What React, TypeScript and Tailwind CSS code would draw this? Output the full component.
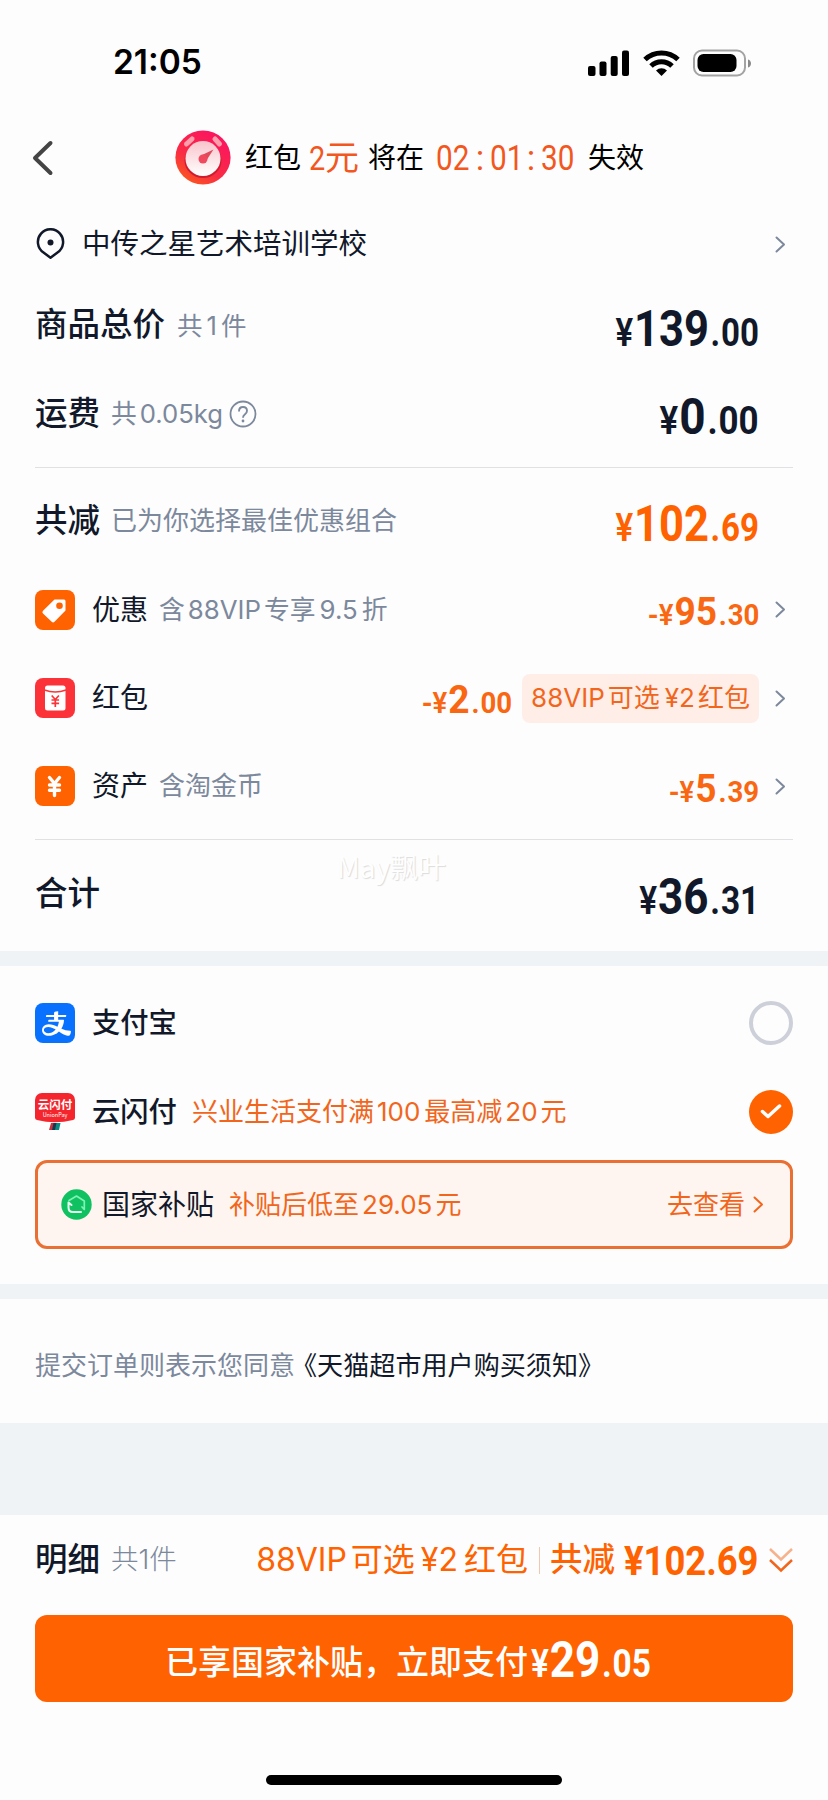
import type { ReactNode } from "react";
import { AiOutlineAlipay } from "react-icons/ai";

interface PriceProps {
	integer: string;
	decimal: string;
	negative?: boolean;
	large?: boolean;
	className?: string;
}

interface RowProps {
	children: ReactNode;
	className?: string;
}

// Latin letters and digits sitting between Chinese characters
const Num = ({ children, className = "mx-[3px]" }: RowProps) => (
	<span className={className}>{children}</span>
);

const Price = ({ integer, decimal, negative, large, className = "" }: PriceProps) => (
	<span
		className={`inline-block whitespace-nowrap font-['Roboto','Noto_Sans_CJK_SC',sans-serif] font-bold leading-none ${
			large ? "text-[38px]" : "text-[29px]"
		} ${className}`}
	>
		{negative && "-"}
		<span className="font-semibold">¥</span>
		<span className={`mr-[2px] ml-px ${large ? "text-[50px]" : "text-[39px]"}`}>{integer}</span>
		<span className="mr-px">.</span>
		{decimal}
	</span>
);

const Chevron = ({ className = "text-[#7c889c]" }: { className?: string }) => (
	<svg width="11" height="17" viewBox="0 0 11 17" className={className}>
		<path
			d="M1.5 1.5 9 8.5 1.5 15.5"
			fill="none"
			stroke="currentColor"
			strokeWidth="2"
			strokeLinecap="round"
			strokeLinejoin="round"
		/>
	</svg>
);

const Row = ({ children, className = "h-[88px]" }: RowProps) => (
	<div className={`flex items-center whitespace-nowrap ${className}`}>{children}</div>
);

const Arrow = () => (
	<div className="flex w-[34px] justify-end pr-[7px]">
		<Chevron />
	</div>
);

const StatusIcons = () => (
	<svg width="166" height="28" viewBox="0 0 166 28">
		<rect x="1" y="17" width="7.5" height="10" rx="2" />
		<rect x="12.5" y="12.5" width="7" height="14.5" rx="2" />
		<rect x="23.7" y="7" width="7" height="20" rx="2" />
		<rect x="35" y="1.5" width="7" height="25.5" rx="2" />
		<g fill="none" stroke="#000" strokeWidth="5">
			<path d="M58 10.5a24 24 0 0 1 33 0" />
			<path d="M64 17a15 15 0 0 1 21 0" />
		</g>
		<path d="M74.5 27l-5.5-5.6a8 8 0 0 1 11 0z" />
		<rect x="107" y="1.5" width="51" height="25" rx="8" fill="none" stroke="#a3a3a3" strokeWidth="2" />
		<rect x="110.5" y="5" width="39" height="18" rx="6" />
		<path d="M161 10.5c4 1 4 7 0 8z" fill="#8a8a8a" />
	</svg>
);

const ClockIcon = () => (
	<svg width="56" height="56" viewBox="0 0 56 56">
		<defs>
			<linearGradient id="clock" x1="0.8" y1="0.1" x2="0.2" y2="1">
				<stop offset="0" stopColor="#fb1560" />
				<stop offset="0.6" stopColor="#f92c44" />
				<stop offset="1" stopColor="#fc5a1c" />
			</linearGradient>
			<linearGradient id="face" x1="0" y1="0" x2="0" y2="1">
				<stop offset="0" stopColor="#f9c4cb" />
				<stop offset="1" stopColor="#fff" />
			</linearGradient>
		</defs>
		<ellipse cx="28" cy="27.5" rx="27.6" ry="27" fill="url(#clock)" />
		<g stroke="#fda0ac" strokeWidth="5" strokeLinecap="round">
			<path d="M11.5 14l5.5-5" />
			<path d="M40 9l4.5 5" />
		</g>
		<ellipse cx="28" cy="30.5" rx="18.5" ry="17.5" fill="#cf1b2e" />
		<circle cx="28" cy="28.5" r="17.5" fill="url(#face)" />
		<path d="M26 25.5 38.5 19.5 31 31z" fill="#e04a5a" />
		<circle cx="28" cy="29" r="4.5" fill="#f0485c" />
	</svg>
);

const TagIcon = () => (
	<svg width="40" height="40" viewBox="0 0 40 40">
		<rect width="40" height="40" rx="8" fill="#ff6200" />
		<path
			d="M19.5 9.5h9.5a1.5 1.5 0 0 1 1.5 1.5v9.5l-11 11.3a2 2 0 0 1-2.8 0L8 23.5a2 2 0 0 1 0-2.8z"
			fill="#fff"
		/>
		<circle cx="24.5" cy="15.7" r="3.3" fill="#ff6200" />
	</svg>
);

const RedPacketIcon = () => (
	<svg width="40" height="40" viewBox="0 0 40 40">
		<rect width="40" height="40" rx="8" fill="#fb3338" />
		<rect x="10" y="7.5" width="20.5" height="25" rx="2.5" fill="#fff" />
		<path d="M9.5 12q10.7 4 21.5 0" fill="none" stroke="#fb3338" strokeWidth="1.5" />
		<path
			d="M16.7 17.5l3.6 4 3.6-4M20.3 21v8M16.5 22h7.6M16.5 25.3h7.6"
			fill="none"
			stroke="#fb3338"
			strokeWidth="1.7"
		/>
	</svg>
);

const YenIcon = () => (
	<svg width="40" height="40" viewBox="0 0 40 40">
		<rect width="40" height="40" rx="8" fill="#ff6200" />
		<path
			d="M14.5 11.5l5 6 5-6M19.5 18v11.5M14.5 19h10M14.5 24.3h10"
			fill="none"
			stroke="#fff"
			strokeWidth="3.4"
			strokeLinecap="round"
			strokeLinejoin="round"
		/>
	</svg>
);

const UnionPayIcon = () => (
	<svg width="40" height="40" viewBox="0 0 40 40" className="font-['Noto_Sans_CJK_SC',sans-serif]">
		<path d="M7 1h26a7 7 0 0 1 7 7v17.5q0 2-2 2.5-18 4.5-36 0-2-.5-2-2.5V8a7 7 0 0 1 7-7z" fill="#f4252c" />
		<text x="20" y="17" fontSize="11.5" fontWeight="700" fill="#fff" textAnchor="middle">
			云闪付
		</text>
		<text x="20" y="24.5" fontSize="5.5" fill="#fff" textAnchor="middle">
			UnionPay
		</text>
		<path d="M16 31h4l-2 7h-4z" fill="#c8323e" />
		<path d="M18.5 31h4l-1.500 7h-4z" fill="#16374f" />
		<path d="M21.5 31h4l-1.500 7h-4z" fill="#0e8a85" />
	</svg>
);

const SubsidyIcon = () => (
	<svg width="31" height="31" viewBox="0 0 31 31">
		<circle cx="15.5" cy="15.5" r="15.2" fill="#0fc161" />
		<g fill="none" strokeLinecap="round" strokeLinejoin="round">
			<path d="M8 11.5 15.5 7l7.800 5v8.5l-2.300-2.5" stroke="#7df3b4" strokeWidth="1.7" />
			<path d="M10.5 16l-3-2.5v5q0 4.500 4.500 4.500h8" stroke="#e6fdf0" strokeWidth="2" />
		</g>
	</svg>
);

const App: React.FC = () => {
	return (
		<div className="relative h-[1800px] w-[828px] overflow-hidden bg-[#fdfdfd] font-['Inter','Noto_Sans_CJK_SC',sans-serif] leading-none text-[#11182a]">
			{/* Status bar */}
			<div className="flex h-[116px] items-center justify-between pt-[9px] pr-[75px] pl-[113px] text-black">
				<span className="text-[33.5px] font-semibold">21:05</span>
				<StatusIcons />
			</div>

			{/* Countdown header */}
			<header className="flex h-[84px] items-center pl-[32px] text-[28px] whitespace-nowrap text-black">
				<svg width="22" height="36" viewBox="0 0 22 36">
					<path
						d="M18.5 3 3 18l15.5 15"
						fill="none"
						stroke="#444"
						strokeWidth="4"
						strokeLinecap="round"
						strokeLinejoin="round"
					/>
				</svg>
				<div className="ml-[121px]">
					<ClockIcon />
				</div>
				<span className="ml-[14px]">红包</span>
				<span className="ml-[8px] font-['Roboto','Noto_Sans_CJK_SC',sans-serif] text-[34px] text-[#f2571f]">
					<span className="inline-block w-[16px] origin-left scale-x-85">2</span>元
				</span>
				<span className="ml-[9px]">将在</span>
				<span className="ml-[12px] flex w-[139px] justify-between font-['Roboto',sans-serif] text-[35px] text-[#f2571f]">
					<span className="w-[34px] origin-left scale-x-85">02</span>
					<span>:</span>
					<span className="w-[31px] origin-left scale-x-85">01</span>
					<span>:</span>
					<span className="w-[34px] origin-left scale-x-85">30</span>
				</span>
				<span className="ml-[13px]">失效</span>
			</header>

			<main>
				<section className="px-[35px]">
					<Row className="h-[81px] pt-[7px] text-[28.5px]">
						<svg width="30" height="32" viewBox="0 0 30 32">
							<path
								d="M15.5 29.700l-7-5.200A12.600 12.700 0 1 1 22.500 24.500z"
								fill="none"
								stroke="currentColor"
								strokeWidth="2.5"
								strokeLinejoin="round"
							/>
							<circle cx="15.5" cy="14.5" r="3" fill="currentColor" />
						</svg>
						<span className="ml-[17px] flex-1">中传之星艺术培训学校</span>
						<Arrow />
					</Row>

					{/* Totals */}
					<Row className="h-[89px] pr-[34px]">
						<span className="text-[32.5px] font-medium">商品总价</span>
						<span className="ml-[12px] flex-1 text-[25.5px] text-[#7c889c]">
							共<Num className="mx-[4px]">1</Num>件
						</span>
						<Price large integer="139" decimal="00" className="mt-[6px] origin-right scale-x-87" />
					</Row>
					<Row className="h-[88px] pr-[34px]">
						<span className="text-[32.5px] font-medium">运费</span>
						<span className="ml-[11px] text-[25.7px] text-[#7c889c]">
							共<Num>0.05kg</Num>
						</span>
						<svg width="28" height="28" viewBox="0 0 28 28" className="ml-[3px] text-[#7c889c]">
							<circle cx="14" cy="14" r="12.5" fill="none" stroke="currentColor" strokeWidth="1.8" />
							<path
								d="M10 11.5q0-4.500 4-4.500t4 3.800q0 2-2 3.400t-2 3.600"
								fill="none"
								stroke="currentColor"
								strokeWidth="1.9"
							/>
							<circle cx="14" cy="21" r="1.4" fill="currentColor" />
						</svg>
						<span className="flex-1" />
						<Price large integer="0" decimal="00" className="mt-[6px] origin-right scale-x-92" />
					</Row>
					<div className="my-[9px] h-px bg-[#dfe1e4]" />
					<Row className="h-[88px] pr-[34px]">
						<span className="text-[32.5px] font-medium">共减</span>
						<span className="ml-[11px] flex-1 text-[26px] text-[#7c889c]">已为你选择最佳优惠组合</span>
						<Price large integer="102" decimal="69" className="mt-[6px] origin-right scale-x-87 text-[#ff6200]" />
					</Row>

					{/* Discounts */}
					<Row className="h-[89px]">
						<TagIcon />
						<span className="ml-[17px] text-[28px]">优惠</span>
						<span className="ml-[11px] flex-1 text-[25.8px] text-[#7c889c]">
							含<Num>88VIP</Num>专享<Num className="mx-[4px]">9.5</Num>折
						</span>
						<Price negative integer="95" decimal="30" className="mt-[5px] origin-right scale-x-95 text-[#f96713]" />
						<Arrow />
					</Row>
					<Row>
						<RedPacketIcon />
						<span className="ml-[17px] flex-1 text-[28px]">红包</span>
						<Price negative integer="2" decimal="00" className="mt-[5px] origin-right scale-x-95 text-[#f96713]" />
						<span className="ml-[10px] flex h-[49px] w-[237px] items-center justify-center rounded-lg bg-[#ffeee7] text-[26px] text-[#f1661c]">
							88VIP<Num className="mr-[5px] ml-[3px]">可选</Num>¥2<Num className="ml-[3px]">红包</Num>
						</span>
						<Arrow />
					</Row>
					<Row>
						<YenIcon />
						<span className="ml-[17px] text-[28px]">资产</span>
						<span className="ml-[11px] flex-1 text-[26px] text-[#7c889c]">含淘金币</span>
						<Price negative integer="5" decimal="39" className="mt-[6px] origin-right scale-x-95 text-[#f96713]" />
						<Arrow />
					</Row>
					<div className="my-[9px] h-px bg-[#dfe1e4]" />
					<Row className="mb-[14px] h-[88px] pr-[34px]">
						<span className="flex-1 pt-[2px] text-[32.5px] font-medium">合计</span>
						<Price large integer="36" decimal="31" className="mt-[7px] origin-right scale-x-88" />
					</Row>
				</section>

				<div className="h-[15px] bg-[#f0f3f6]" />

				{/* Payment methods */}
				<section className="px-[35px] pt-[13px] pb-[35px]">
					<Row>
						<span className="flex size-[40px] items-center justify-center rounded-lg bg-[#0872ff] pl-[3px] text-white">
							<AiOutlineAlipay size={33} />
						</span>
						<span className="ml-[17px] flex-1 pt-px text-[28.3px] font-medium">支付宝</span>
						<span className="size-[44px] rounded-full border-4 border-[#cdd0d9]" />
					</Row>
					<Row className="h-[89px]">
						<UnionPayIcon />
						<span className="ml-[17px] pt-px text-[28.3px] font-medium">云闪付</span>
						<span className="ml-[15px] flex-1 text-[26px] text-[#f1661c]">
							兴业生活支付满<Num className="mr-[4px] ml-[3px]">100</Num>最高减
							<Num className="mx-[3px]">20</Num>元
						</span>
						<span className="flex size-[44px] items-center justify-center rounded-full bg-[#ff6200]">
							<svg width="22" height="17" viewBox="0 0 22 17">
								<path
									d="M2.5 8.5 8 13.5 19.5 3"
									fill="none"
									stroke="#fff"
									strokeWidth="3.5"
									strokeLinecap="round"
									strokeLinejoin="round"
								/>
							</svg>
						</span>
					</Row>
					<Row className="mt-1 h-[89px] rounded-xl border-3 border-[#ea6f33] bg-[#fff5f0] pr-[26px] pl-[23px] text-[26px] text-[#f1661c]">
						<SubsidyIcon />
						<span className="ml-[10px] text-[28px] text-[#11182a]">国家补贴</span>
						<span className="ml-[15px] flex-1">
							补贴后低至<Num>29.05</Num>元
						</span>
						<span className="mr-[8px]">去查看</span>
						<Chevron className="text-[#f1661c]" />
					</Row>
				</section>

				<div className="h-[15px] bg-[#f0f3f6]" />

				<p className="flex h-[124px] items-center px-[35px] pt-[10px] text-[26px] whitespace-nowrap text-[#7c889c]">
					提交订单则表示您同意
					<span className="-ml-[4px] text-[26.1px] text-[#11182a]">《天猫超市用户购买须知》</span>
				</p>

				<div className="h-[92px] bg-[#f0f3f6]" />
			</main>

			{/* Checkout bar */}
			<footer className="px-[35px]">
				<Row className="h-[88px] pt-[2px] text-[32px] text-[#ff6200]">
					<span className="text-[32.5px] font-medium text-[#11182a]">明细</span>
					<span className="ml-[11px] flex-1 text-[27.5px] font-light text-[#7c889c]">共1件</span>
					<span>
						88VIP<Num className="mr-[6px] ml-[4px]">可选</Num>¥2<Num className="ml-[6px]">红包</Num>
					</span>
					<span className="mr-[10px] ml-[11px] h-[27px] w-px bg-[#f3c7ae]" />
					<span className="text-[32.5px] font-medium">共减</span>
					<span className="mt-[4px] ml-[9px] w-[135px] origin-left scale-x-91 font-['Roboto',sans-serif] text-[40px] font-bold">
						¥102.69
					</span>
					<svg width="24" height="26" viewBox="0 0 24 26" className="ml-[10px]">
						<g fill="none" stroke="#f1661c" strokeWidth="2.5">
							<path d="M1 2l11 10.5L23 2" opacity="0.5" />
							<path d="M1 13l11 10.5L23 13" />
						</g>
					</svg>
				</Row>
				<button className="mt-3 flex h-[87px] w-full items-center justify-center rounded-xl bg-[#ff6200] text-[33px] font-medium whitespace-nowrap text-white">
					<span className="pt-[8px]">已享国家补贴，立即支付</span>
					<Price large integer="29" decimal="05" className="mt-[2px] ml-[3px] w-[132px] origin-left scale-x-88" />
				</button>
				<div className="mx-auto mt-[73px] h-[10px] w-[296px] rounded-full bg-black" />
			</footer>

			{/* Author watermark */}
			<span className="absolute top-[852px] left-[337px] font-['Noto_Sans_CJK_SC',sans-serif] text-[28px] text-[#fefefe] [text-shadow:1px_1px_1px_#dcdcdc]">
				May飘叶
			</span>
		</div>
	);
};

export default App;
